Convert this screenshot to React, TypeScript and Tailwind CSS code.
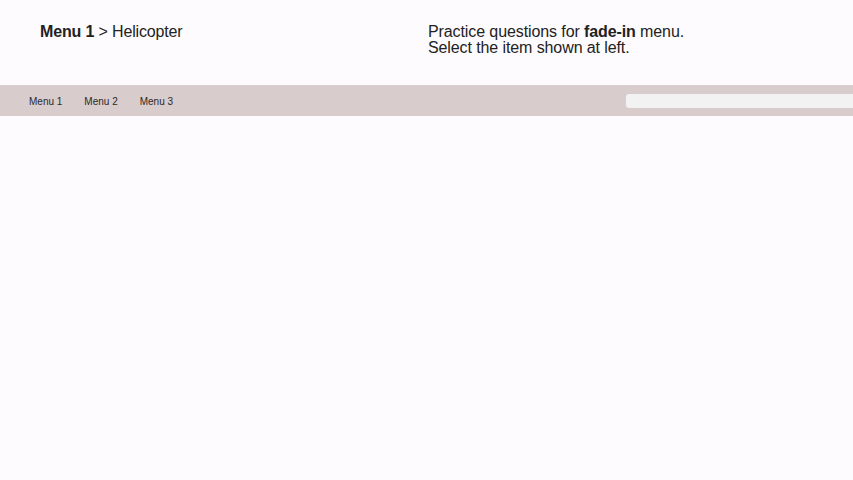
export default function App() {
  const menus = ["Menu 1", "Menu 2", "Menu 3"];

  return (
    <div className="min-h-[480px] w-full overflow-hidden bg-[#fdfbfd] font-['Liberation_Sans',Arial,sans-serif] text-[#222]">
      {/* header */}
      <div className="flex h-[85px] pt-[23px]">
        <div className="w-[428px] pl-[40px] text-[16px] leading-[18px] tracking-[-0.15px]">
          <span className="font-bold">Menu 1</span> &gt; Helicopter
        </div>
        <div className="pt-[1px] text-[16px] leading-[16px] tracking-[-0.1px]">
          <p>
            Practice questions for <span className="font-bold">fade-in</span> menu.
          </p>
          <p>Select the item shown at left.</p>
        </div>
      </div>

      {/* menu bar */}
      <div className="flex h-[31px] items-center bg-[#d8cccd]">
        <nav className="flex w-[626px] gap-[22px] pl-[29px] pt-[1px] text-[10px] text-[#2a2a2a]">
          {menus.map((m) => (
            <span key={m} className="cursor-default">
              {m}
            </span>
          ))}
        </nav>
        <div className="h-[14px] flex-1 rounded-l-[3px] bg-[#f2f2f2]" />
      </div>
    </div>
  );
}
